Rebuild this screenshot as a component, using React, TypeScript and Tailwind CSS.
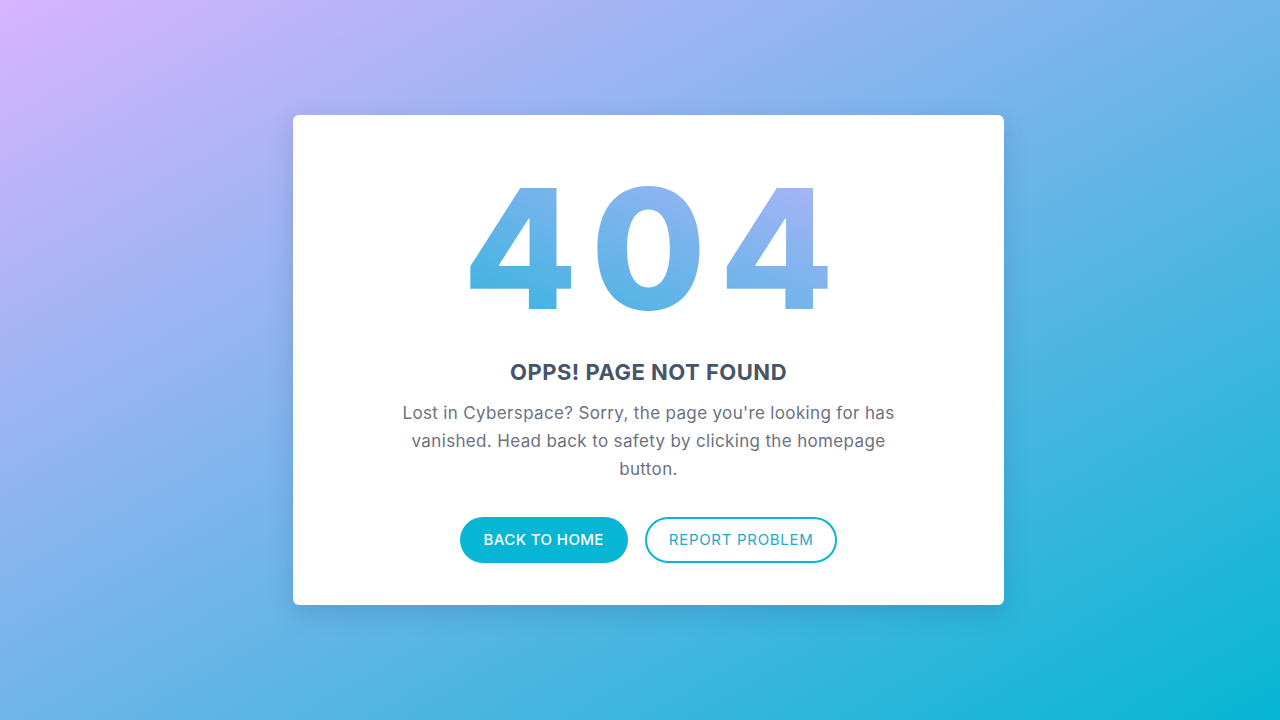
import React from "react";

export default function App() {
  return (
    <div
      className="flex min-h-screen w-full items-center justify-center bg-[linear-gradient(to_bottom_right,#d8b4fe,#06b6d4)] pl-[17px]"
      style={{ fontFamily: "Inter, 'Noto Sans', sans-serif" }}
    >
      <div className="flex h-[490px] w-[711px] flex-col items-center rounded-md bg-white pt-[50px] shadow-[0_8px_24px_rgba(30,60,120,0.18)]">
        {/* Big number */}
        <h1 className="bg-[linear-gradient(to_top_right,#2fb4de,#b4b4f8)] bg-clip-text pl-[13px] text-[167px] leading-none font-extrabold tracking-[13px] text-transparent">
          404
        </h1>

        <h2 className="mt-[24px] text-[22px] font-bold tracking-[0.5px] text-[#475569]">
          OPPS! PAGE NOT FOUND
        </h2>

        <p className="mt-[10px] w-[540px] text-center text-[17px] leading-[28px] tracking-[0.35px] text-[#6b7280]">
          Lost in Cyberspace? Sorry, the page you're looking for has
          <br />
          vanished. Head back to safety by clicking the homepage
          <br />
          button.
        </p>

        <div className="mt-[34px] flex items-center gap-[17px]">
          <button className="h-[46px] rounded-full bg-[#06b6d4] px-[24px] text-[15px] font-medium tracking-[0.4px] text-white">
            BACK TO HOME
          </button>
          <button className="h-[46px] rounded-full border-2 border-[#06b6d4] bg-white px-[22px] text-[15px] font-normal tracking-[0.7px] text-[#1fa9cc]">
            REPORT PROBLEM
          </button>
        </div>
      </div>
    </div>
  );
}
